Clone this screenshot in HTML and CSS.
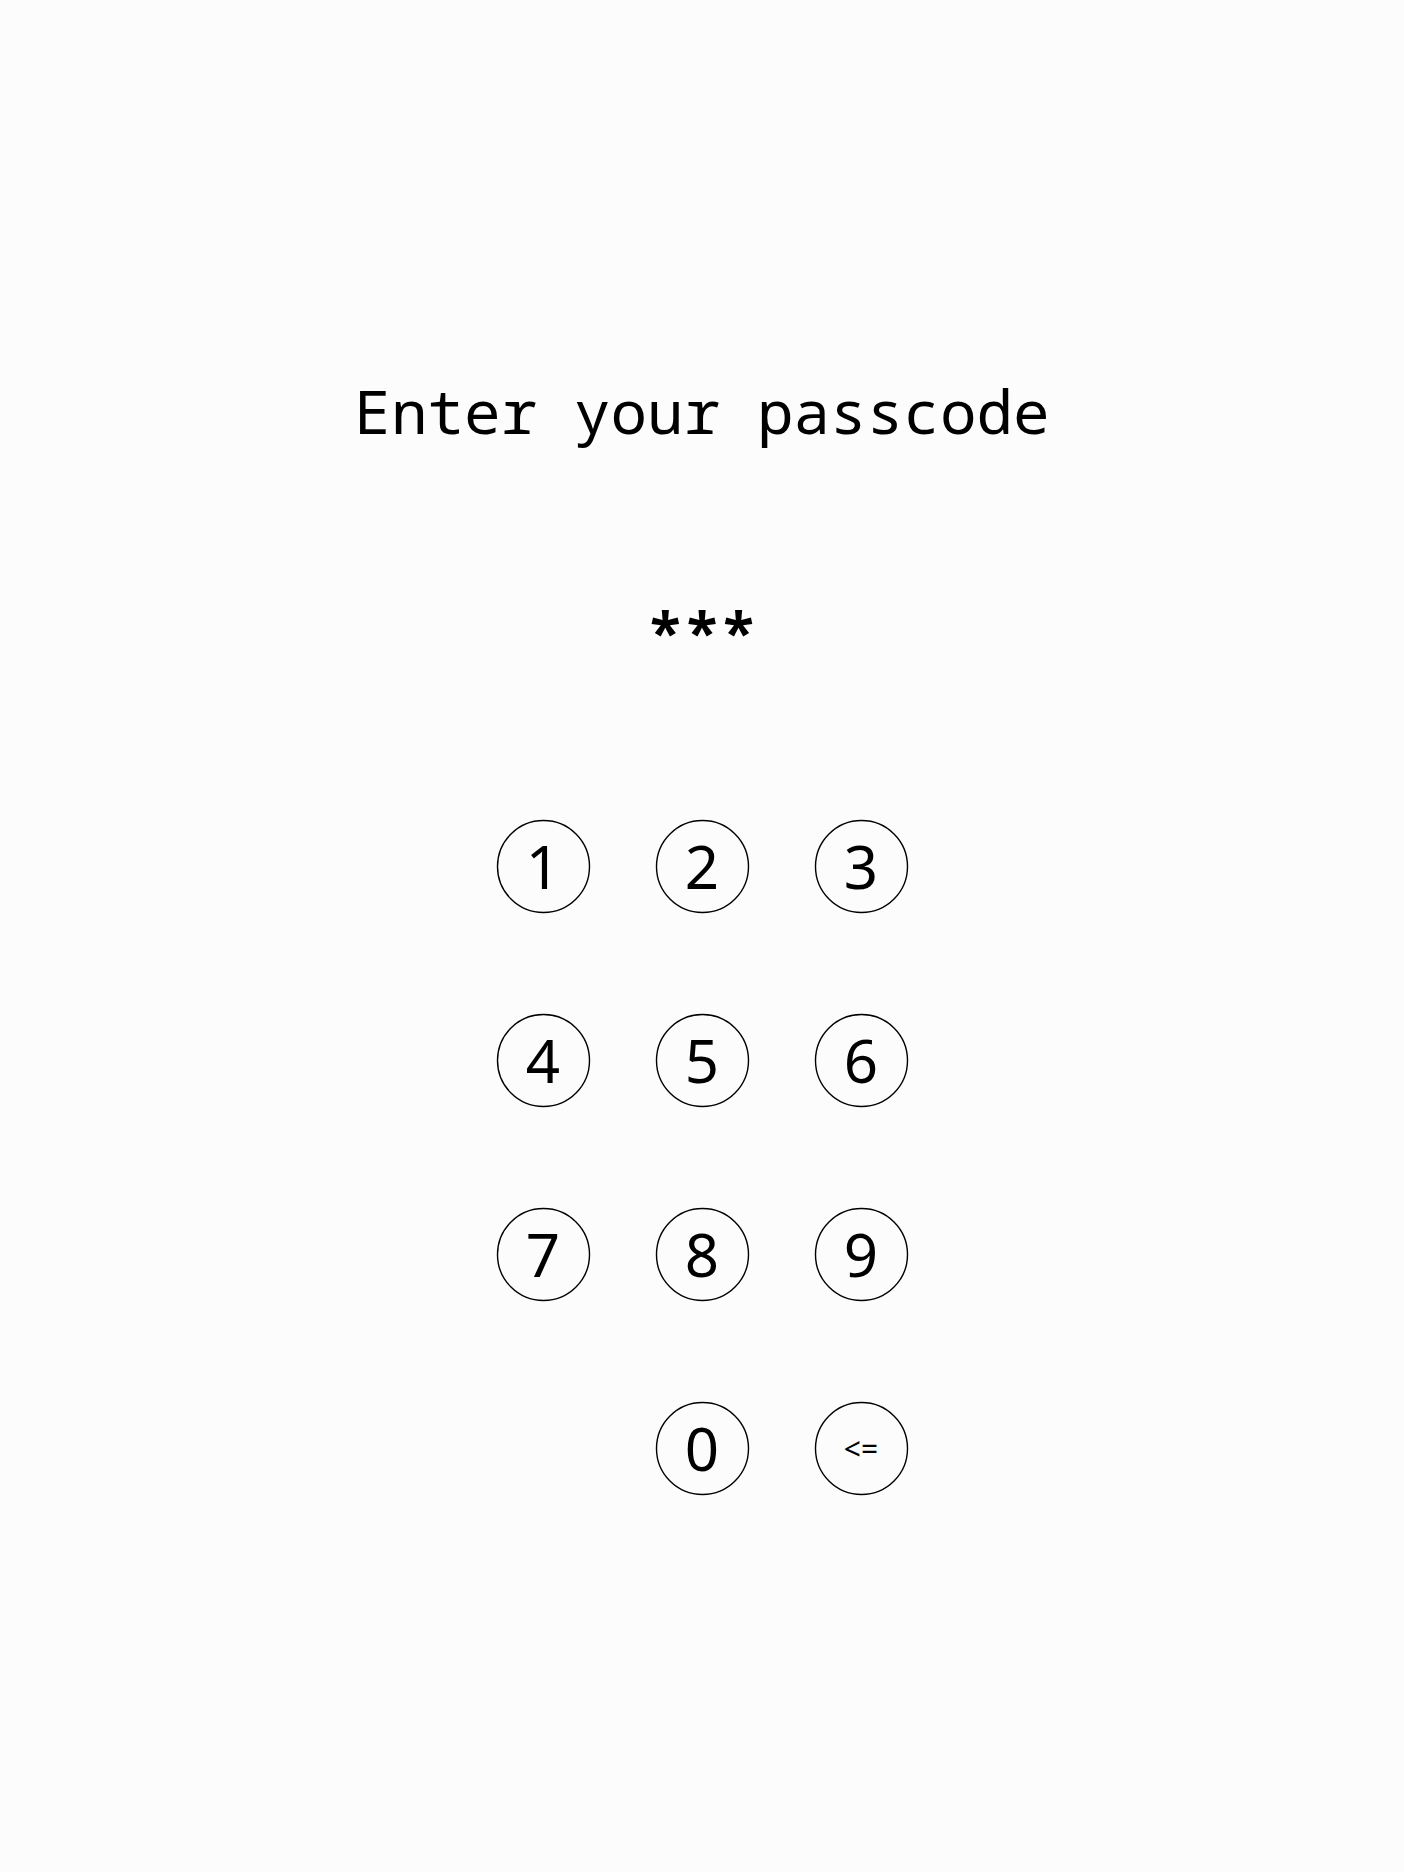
FILE: index.html
```html
<!DOCTYPE html>
<html lang="en">
<head>
<meta charset="utf-8">
<title>Passcode</title>
<link rel="stylesheet" href="styles.css">
</head>
<body>
<main class="screen">
  <h1 class="title">Enter your passcode</h1>
  <div class="code">***</div>
  <div class="keypad">
    <button class="key"><svg class="ring" viewBox="0 0 93 93"><circle cx="46.5" cy="46.5" r="46"/></svg>1</button>
    <button class="key"><svg class="ring" viewBox="0 0 93 93"><circle cx="46.5" cy="46.5" r="46"/></svg>2</button>
    <button class="key"><svg class="ring" viewBox="0 0 93 93"><circle cx="46.5" cy="46.5" r="46"/></svg>3</button>
    <button class="key"><svg class="ring" viewBox="0 0 93 93"><circle cx="46.5" cy="46.5" r="46"/></svg>4</button>
    <button class="key"><svg class="ring" viewBox="0 0 93 93"><circle cx="46.5" cy="46.5" r="46"/></svg>5</button>
    <button class="key"><svg class="ring" viewBox="0 0 93 93"><circle cx="46.5" cy="46.5" r="46"/></svg>6</button>
    <button class="key"><svg class="ring" viewBox="0 0 93 93"><circle cx="46.5" cy="46.5" r="46"/></svg>7</button>
    <button class="key"><svg class="ring" viewBox="0 0 93 93"><circle cx="46.5" cy="46.5" r="46"/></svg>8</button>
    <button class="key"><svg class="ring" viewBox="0 0 93 93"><circle cx="46.5" cy="46.5" r="46"/></svg>9</button>
    <span class="key-empty"></span>
    <button class="key"><svg class="ring" viewBox="0 0 93 93"><circle cx="46.5" cy="46.5" r="46"/></svg>0</button>
    <button class="key key-back"><svg class="ring" viewBox="0 0 93 93"><circle cx="46.5" cy="46.5" r="46"/></svg>&lt;=</button>
  </div>
</main>
</body>
</html>
```
FILE: styles.css
```css
html, body {
  margin: 0;
  padding: 0;
  background: #fcfcfc;
}
.screen {
  width: 1404px;
  height: 1872px;
  display: flex;
  flex-direction: column;
  align-items: center;
  padding-top: 376px;
  box-sizing: border-box;
}
.title {
  margin: 0;
  font-family: "Noto Sans Mono", "DejaVu Sans Mono", monospace;
  font-weight: normal;
  font-size: 61px;
  line-height: 70px;
  color: #000;
}
.code {
  margin-top: 152px;
  font-family: "Noto Sans Mono", "DejaVu Sans Mono", monospace;
  font-weight: bold;
  font-size: 61px;
  line-height: 70px;
  color: #000;
}
.keypad {
  margin-top: 152px;
  display: grid;
  grid-template-columns: repeat(3, 93px);
  grid-auto-rows: 93px;
  column-gap: 66px;
  row-gap: 101px;
}
.key {
  position: relative;
  box-sizing: border-box;
  width: 93px;
  height: 93px;
  padding: 0 0 2px;
  border: none;
  border-radius: 50%;
  background: transparent;
  display: flex;
  align-items: center;
  justify-content: center;
  font-family: "Noto Sans", sans-serif;
  font-size: 60px;
  line-height: 1;
  color: #000;
}
.ring {
  position: absolute;
  left: 0;
  top: 0;
  width: 93px;
  height: 93px;
  overflow: visible;
}
.ring circle {
  fill: none;
  stroke: #000;
  stroke-width: 1.4;
}
.key-back {
  font-size: 30px;
  padding: 0;
}
```
